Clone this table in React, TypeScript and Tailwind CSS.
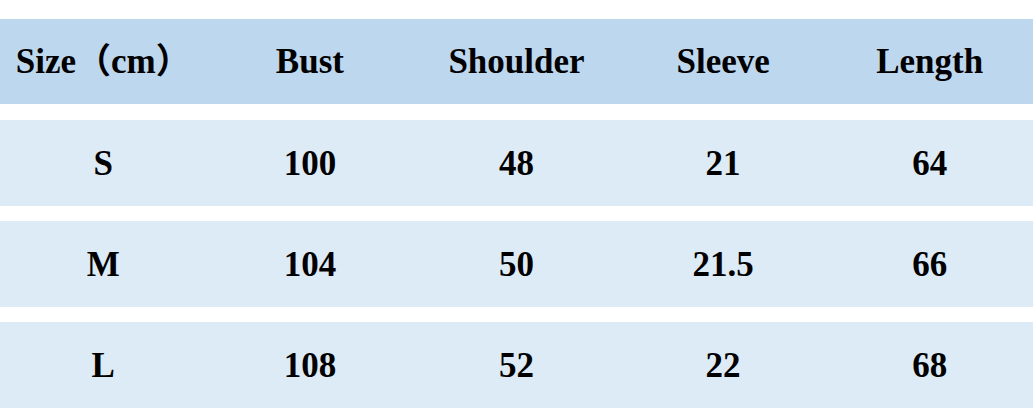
import React from "react";

const header = ["Size（cm）", "Bust", "Shoulder", "Sleeve", "Length"];
const rows = [
  ["S", "100", "48", "21", "64"],
  ["M", "104", "50", "21.5", "66"],
  ["L", "108", "52", "22", "68"],
];

const font = {
  fontFamily: '"Liberation Serif", "Noto Sans CJK SC", serif',
};

export default function App() {
  return (
    <div
      className="w-[1033px] h-[409px] bg-white overflow-hidden pt-[19px] text-black font-bold text-[35px]"
      style={font}
    >
      <div className="grid grid-cols-5 h-[85px] bg-[#bdd7ee] mb-[16px] items-center">
        {header.map((h) => (
          <div key={h} className="text-center whitespace-nowrap leading-none">
            {h}
          </div>
        ))}
      </div>
      <div className="flex flex-col gap-[15px]">
        {rows.map((r) => (
          <div
            key={r[0]}
            className="grid grid-cols-5 h-[86px] bg-[#ddebf7] items-center"
          >
            {r.map((c, i) => (
              <div key={i} className="text-center whitespace-nowrap leading-none">
                {c}
              </div>
            ))}
          </div>
        ))}
      </div>
    </div>
  );
}
